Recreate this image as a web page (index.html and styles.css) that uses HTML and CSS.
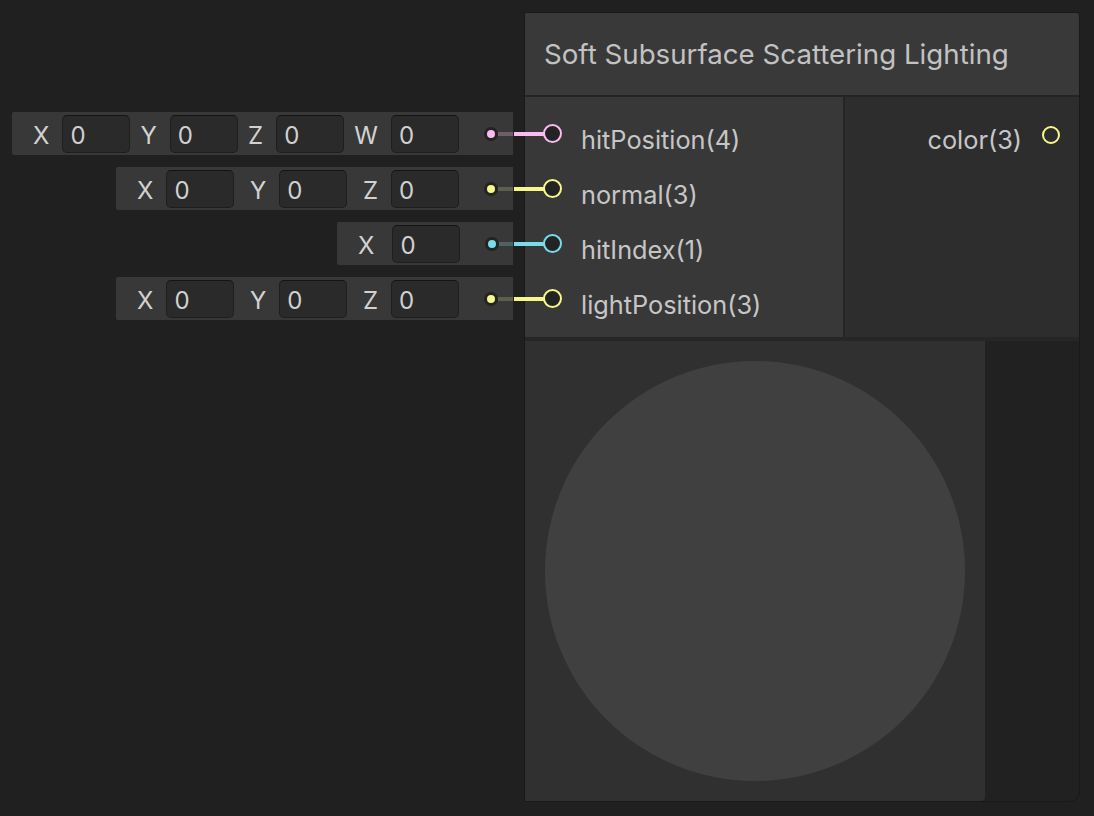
FILE: index.html
```html
<!DOCTYPE html>
<html>
<head>
<meta charset="utf-8">
<link rel="stylesheet" href="styles.css">
</head>
<body>
<div class="canvas">
  <div class="inputs-col">
    <div class="field-row w4 pink">
      <div class="fields">
        <div class="grp"><span class="lbl">X</span><span class="fld">0</span></div>
        <div class="grp"><span class="lbl">Y</span><span class="fld">0</span></div>
        <div class="grp"><span class="lbl">Z</span><span class="fld">0</span></div>
        <div class="grp"><span class="lbl">W</span><span class="fld">0</span></div>
      </div>
      <span class="dot"></span><span class="stub"></span>
    </div>
    <div class="field-row w3 yellow">
      <div class="fields">
        <div class="grp"><span class="lbl">X</span><span class="fld">0</span></div>
        <div class="grp"><span class="lbl">Y</span><span class="fld">0</span></div>
        <div class="grp"><span class="lbl">Z</span><span class="fld">0</span></div>
      </div>
      <span class="dot"></span><span class="stub"></span>
    </div>
    <div class="field-row w1 cyan">
      <div class="fields single">
        <div class="grp"><span class="lbl">X</span><span class="fld">0</span></div>
      </div>
      <span class="dot"></span><span class="stub"></span>
    </div>
    <div class="field-row w3 yellow">
      <div class="fields">
        <div class="grp"><span class="lbl">X</span><span class="fld">0</span></div>
        <div class="grp"><span class="lbl">Y</span><span class="fld">0</span></div>
        <div class="grp"><span class="lbl">Z</span><span class="fld">0</span></div>
      </div>
      <span class="dot"></span><span class="stub"></span>
    </div>
  </div>

  <div class="node">
    <div class="node-title">Soft Subsurface Scattering Lighting</div>
    <div class="node-body">
      <div class="ports-in">
        <div class="port pink"><span class="port-ring"></span><span class="port-name">hitPosition(4)</span></div>
        <div class="port yellow"><span class="port-ring"></span><span class="port-name">normal(3)</span></div>
        <div class="port cyan"><span class="port-ring"></span><span class="port-name">hitIndex(1)</span></div>
        <div class="port yellow"><span class="port-ring"></span><span class="port-name">lightPosition(3)</span></div>
      </div>
      <div class="ports-out">
        <div class="port-out yellow"><span class="port-name">color(3)</span><span class="port-ring out"></span></div>
      </div>
    </div>
    <div class="node-preview-wrap">
      <div class="preview"><div class="sphere"></div></div>
    </div>
  </div>
</div>
</body>
</html>
```

FILE: styles.css
```css
html, body {
  margin: 0;
  padding: 0;
  background: #202020;
  width: 1094px;
  height: 816px;
  overflow: hidden;
  font-family: "Inter", "Noto Sans", sans-serif;
}

.canvas {
  display: flex;
  align-items: flex-start;
}

.inputs-col {
  width: 513px;
  padding-top: 112px;
  display: flex;
  flex-direction: column;
  align-items: flex-end;
  gap: 12px;
}

.field-row {
  height: 43px;
  box-sizing: border-box;
  background: #383838;
  border-radius: 2px 0 0 2px;
  display: flex;
  align-items: center;
  padding-left: 21px;
  color: #d2d2d2;
  font-size: 24px;
}
.w4 { width: 501px; }
.w3 { width: 397px; }
.w1 { width: 176px; }

.fields {
  flex: 1;
  display: flex;
  justify-content: space-between;
  align-items: center;
}
.fields.single {
  justify-content: flex-start;
}
.grp {
  display: flex;
  align-items: center;
}
.lbl {
  margin-right: 13px;
  padding-top: 3px;
}
.single .lbl {
  margin-right: 18px;
}
.fld {
  width: 68px;
  height: 38px;
  box-sizing: border-box;
  background: #2a2a2a;
  border: 1px solid #1e1e1e;
  border-top-color: #141414;
  border-radius: 5px;
  padding-left: 7px;
  padding-top: 3px;
  display: flex;
  align-items: center;
  color: #d0d0d0;
}

.dot {
  width: 14px;
  height: 14px;
  margin-left: 25px;
  border-radius: 50%;
  background: #232323;
  display: flex;
  align-items: center;
  justify-content: center;
}
.dot::after {
  content: "";
  width: 8px;
  height: 8px;
  border-radius: 50%;
  background: var(--c);
}
.stub {
  width: 15px;
  height: 4px;
  background: var(--dim);
}

.pink { --c: #fdbaf1; --dim: #6d5e69; }
.yellow { --c: #f8f88a; --dim: #5e5e4c; }
.cyan { --c: #76dde9; --dim: #4b6266; }

.node {
  margin-top: 12px;
  margin-left: 11px;
  width: 556px;
  box-sizing: border-box;
  border: 1px solid #191919;
  border-radius: 0 4px 10px 0;
  background: #212121;
}

.node-title {
  height: 82px;
  background: #393939;
  border-bottom: 2px solid #242424;
  border-radius: 0 3px 0 0;
  padding-left: 19px;
  display: flex;
  align-items: center;
  color: #c2c2c2;
  font-size: 27.7px;
}

.node-body {
  display: flex;
  height: 240px;
  border-bottom: 4px solid #262626;
}

.ports-in {
  width: 320px;
  background: #383838;
  border-right: 2px solid #252525;
  padding-top: 9px;
  box-sizing: border-box;
}

.port {
  position: relative;
  height: 55px;
  display: flex;
  align-items: center;
  padding-left: 18px;
  color: #c6c6c6;
  font-size: 25.3px;
}
.port::before {
  content: "";
  position: absolute;
  left: -11px;
  width: 32px;
  height: 4px;
  background: var(--c);
  top: 50%;
  margin-top: -2px;
}
.port-name {
  margin-top: 12px;
}

.port-ring {
  position: relative;
  width: 19px;
  height: 19px;
  box-sizing: border-box;
  border: 2px solid var(--c);
  border-radius: 50%;
  background: #232323;
  margin-right: 19px;
}

.ports-out {
  flex: 1;
  background: #2d2d2d;
  padding-top: 13px;
  box-sizing: border-box;
}
.port-out {
  height: 50px;
  display: flex;
  align-items: center;
  justify-content: flex-end;
  padding-right: 19px;
  color: #c6c6c6;
  font-size: 25.3px;
}
.port-out .port-name {
  margin-top: 8px;
}
.port-ring.out {
  width: 18px;
  height: 18px;
  margin-right: 0;
  margin-left: 20px;
  background: #2d2d2d;
}

.node-preview-wrap {
  display: flex;
}
.preview {
  width: 460px;
  height: 460px;
  background: #303030;
  border-radius: 0 0 4px 0;
  display: flex;
  align-items: center;
  justify-content: center;
}
.sphere {
  width: 420px;
  height: 420px;
  border-radius: 50%;
  background: #404040;
}
```
